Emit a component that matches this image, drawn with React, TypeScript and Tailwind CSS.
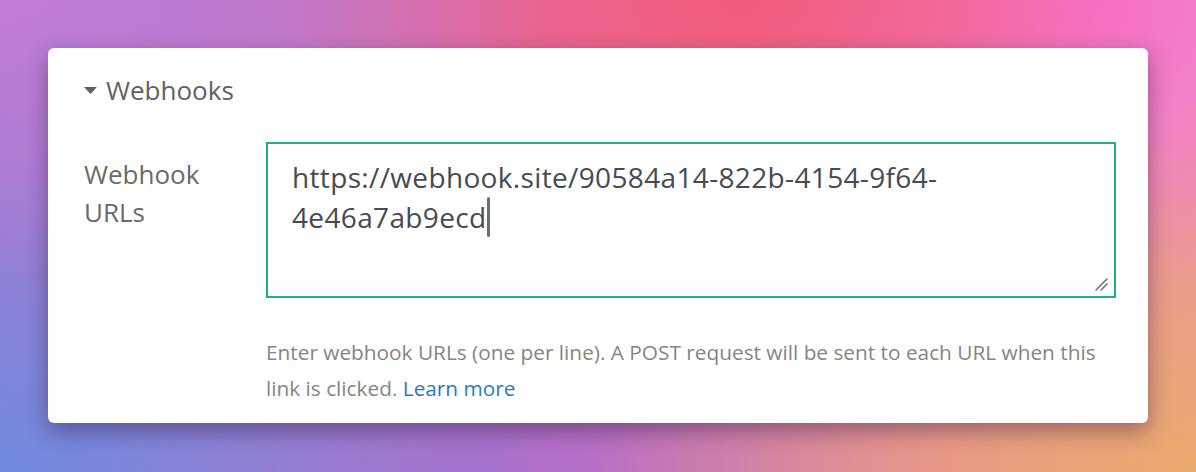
export default function App() {
  return (
    <div className="w-[1196px] h-[472px] overflow-hidden bg-[radial-gradient(ellipse_45%_60%_at_0%_0%,#c27cd8_0%,transparent_100%),radial-gradient(ellipse_40%_55%_at_62%_0%,#f35a7a_0%,transparent_100%),radial-gradient(ellipse_35%_60%_at_92%_0%,#f576dc_0%,transparent_100%),radial-gradient(ellipse_45%_70%_at_0%_100%,#6f8ade_0%,transparent_100%),radial-gradient(ellipse_50%_80%_at_100%_100%,#eaa96c_0%,transparent_100%),radial-gradient(ellipse_40%_60%_at_40%_100%,#a96fce_0%,transparent_100%),linear-gradient(90deg,#a07ad2,#e070a8,#ec90a8)] pt-[48px] pl-[48px] font-['Open_Sans',sans-serif]">
      <div className="relative w-[1100px] h-[375px] bg-white rounded-md shadow-[0_8px_22px_rgba(40,20,60,0.42)] pl-[36px] pr-[32px] pt-[25px]">
        <div className="flex items-center gap-[9px] text-[26px] leading-[34px] text-[#5e6265]">
          <svg width="13" height="8" viewBox="0 0 13 8" className="mt-[2px]">
            <path d="M0 0H13L6.5 7Z" fill="#5e6265" />
          </svg>
          <span>Webhooks</span>
        </div>

        <div className="flex mt-[35px]">
          <div className="w-[182px] shrink-0 pt-[13px] text-[26px] leading-[38px] text-[#6a6a6a]">
            Webhook
            <br />
            URLs
          </div>
          <div className="flex-1">
            <div className="relative h-[156px] border-2 border-[#1fae8f] px-[24px] pt-[14px] text-[28px] leading-[39px] tracking-[0.35px] text-[#444b53]">
              <div>https://webhook.site/90584a14-822b-4154-9f64-</div>
              <div className="flex items-center">
                <span>4e46a7ab9ecd</span>
                <span className="inline-block w-[3px] h-[40px] rounded-sm bg-[#6b7078]" />
              </div>
              <svg width="14" height="14" viewBox="0 0 14 14" className="absolute right-[6px] bottom-[5px]">
                <path d="M13 2L2 13M13 7L7 13" stroke="#6f6f6f" strokeWidth="1.5" strokeLinecap="round" />
              </svg>
            </div>
            <p className="mt-[36px] text-[20.8px] leading-[36px] text-[#858585]">
              Enter webhook URLs (one per line). A POST request will be sent to each URL when this link is clicked.{" "}
              <a href="#" className="text-[#2c79c2]">
                Learn more
              </a>
            </p>
          </div>
        </div>
      </div>
    </div>
  );
}
